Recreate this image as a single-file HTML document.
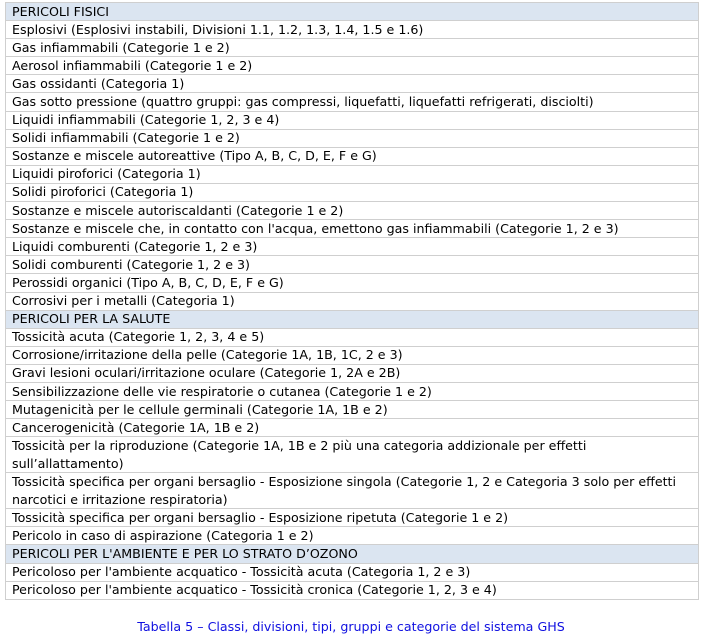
<!DOCTYPE html>
<html><head><meta charset="utf-8"><style>
body{margin:0;background:#fff;width:702px;height:640px;overflow:hidden;font-family:"DejaVu Sans",sans-serif;font-size:12.65px;color:#000}
table{position:absolute;left:5px;top:2px;width:694px;border-collapse:collapse}
td{border:1px solid #cfcfcf;padding:0 0 0 6px;line-height:16px;height:17.1px;white-space:nowrap}
td.d{line-height:17.5px;height:35px}
tr.h td{background:#dbe5f1}
.cap{position:absolute;left:0;width:702px;top:619px;text-align:center;color:#1010e0;font-size:12.65px}
</style></head><body>
<table>
<tr class="h"><td>PERICOLI FISICI</td></tr>
<tr><td>Esplosivi (Esplosivi instabili, Divisioni 1.1, 1.2, 1.3, 1.4, 1.5 e 1.6)</td></tr>
<tr><td>Gas infiammabili (Categorie 1 e 2)</td></tr>
<tr><td>Aerosol infiammabili (Categorie 1 e 2)</td></tr>
<tr><td>Gas ossidanti (Categoria 1)</td></tr>
<tr><td>Gas sotto pressione (quattro gruppi: gas compressi, liquefatti, liquefatti refrigerati, disciolti)</td></tr>
<tr><td>Liquidi infiammabili (Categorie 1, 2, 3 e 4)</td></tr>
<tr><td>Solidi infiammabili (Categorie 1 e 2)</td></tr>
<tr><td>Sostanze e miscele autoreattive (Tipo A, B, C, D, E, F e G)</td></tr>
<tr><td>Liquidi piroforici (Categoria 1)</td></tr>
<tr><td>Solidi piroforici (Categoria 1)</td></tr>
<tr><td>Sostanze e miscele autoriscaldanti (Categorie 1 e 2)</td></tr>
<tr><td>Sostanze e miscele che, in contatto con l'acqua, emettono gas infiammabili (Categorie 1, 2 e 3)</td></tr>
<tr><td>Liquidi comburenti (Categorie 1, 2 e 3)</td></tr>
<tr><td>Solidi comburenti (Categorie 1, 2 e 3)</td></tr>
<tr><td>Perossidi organici (Tipo A, B, C, D, E, F e G)</td></tr>
<tr><td>Corrosivi per i metalli (Categoria 1)</td></tr>
<tr class="h"><td>PERICOLI PER LA SALUTE</td></tr>
<tr><td>Tossicità acuta (Categorie 1, 2, 3, 4 e 5)</td></tr>
<tr><td>Corrosione/irritazione della pelle (Categorie 1A, 1B, 1C, 2 e 3)</td></tr>
<tr><td>Gravi lesioni oculari/irritazione oculare (Categorie 1, 2A e 2B)</td></tr>
<tr><td>Sensibilizzazione delle vie respiratorie o cutanea (Categorie 1 e 2)</td></tr>
<tr><td>Mutagenicità per le cellule germinali (Categorie 1A, 1B e 2)</td></tr>
<tr><td>Cancerogenicità (Categorie 1A, 1B e 2)</td></tr>
<tr><td class="d">Tossicità per la riproduzione (Categorie 1A, 1B e 2 più una categoria addizionale per effetti<br>sull’allattamento)</td></tr>
<tr><td class="d">Tossicità specifica per organi bersaglio - Esposizione singola (Categorie 1, 2 e Categoria 3 solo per effetti<br>narcotici e irritazione respiratoria)</td></tr>
<tr><td>Tossicità specifica per organi bersaglio - Esposizione ripetuta (Categorie 1 e 2)</td></tr>
<tr><td>Pericolo in caso di aspirazione (Categoria 1 e 2)</td></tr>
<tr class="h"><td>PERICOLI PER L'AMBIENTE E PER LO STRATO D’OZONO</td></tr>
<tr><td>Pericoloso per l'ambiente acquatico - Tossicità acuta (Categoria 1, 2 e 3)</td></tr>
<tr><td>Pericoloso per l'ambiente acquatico - Tossicità cronica (Categorie 1, 2, 3 e 4)</td></tr>
</table>
<div class="cap">Tabella 5 – Classi, divisioni, tipi, gruppi e categorie del sistema GHS</div>
</body></html>
